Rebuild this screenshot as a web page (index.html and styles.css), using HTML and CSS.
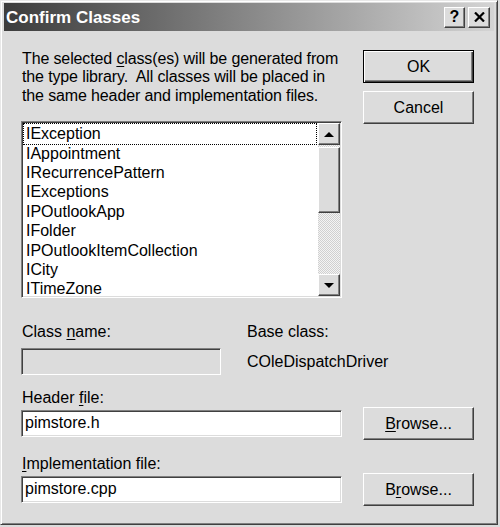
FILE: index.html
```html
<!DOCTYPE html>
<html lang="en">
<head>
    <meta charset="UTF-8">
    <title>Confirm Classes</title>
    <link rel="stylesheet" href="styles.css">
</head>
<body>
    <div class="window">
      <div class="titlebar">
        <span class="title">Confirm Classes</span>
        <div class="caption">
          <div class="cap-btn">?</div>
          <div class="cap-btn close">
            <svg width="11" height="10" viewBox="0 0 11 10">
              <path d="M1 0.5 L10 9.5 M10 0.5 L1 9.5" stroke="#000" stroke-width="2.2" fill="none"/>
            </svg>
          </div>
        </div>
      </div>
      <div class="client">
        <div class="top">
          <div class="leftPanel">
            <p class="intro">The selected <u>c</u>lass(es) will be generated from<br>the type library.&nbsp; All classes will be placed in<br>the same header and implementation files.</p>
            <div class="listbox">
              <ul class="items">
                <li class="focus">IException</li>
                <li>IAppointment</li>
                <li>IRecurrencePattern</li>
                <li>IExceptions</li>
                <li>IPOutlookApp</li>
                <li>IFolder</li>
                <li>IPOutlookItemCollection</li>
                <li>ICity</li>
                <li>ITimeZone</li>
              </ul>
              <div class="scrollbar">
                <div class="sb-btn">
                  <svg width="10" height="5" viewBox="0 0 10 5"><polygon points="5,0 10,5 0,5" fill="#000"/></svg>
                </div>
                <div class="sb-track sb-gap"></div>
                <div class="sb-thumb"></div>
                <div class="sb-track"></div>
                <div class="sb-btn">
                  <svg width="10" height="5" viewBox="0 0 10 5"><polygon points="0,0 10,0 5,5" fill="#000"/></svg>
                </div>
              </div>
            </div>
          </div>
          <div class="rightPanel">
            <div class="btn default">OK</div>
            <div class="btn">Cancel</div>
          </div>
        </div>

        <div class="form">
          <div class="labels">
            <span class="class-label">Class <u>n</u>ame:</span>
            <span>Base class:</span>
          </div>
          <div class="class-row">
            <div class="edit disabled"></div>
            <span class="base">COleDispatchDriver</span>
          </div>
          <div class="label header-label">Header <u>f</u>ile:</div>
          <div class="file-row">
            <div class="edit">pimstore.h</div>
            <div class="btn"><span><u>B</u>rowse...</span></div>
          </div>
          <div class="label impl-label"><u>I</u>mplementation file:</div>
          <div class="file-row">
            <div class="edit">pimstore.cpp</div>
            <div class="btn"><span>B<u>r</u>owse...</span></div>
          </div>
        </div>
      </div>
    </div>
</body>
</html>
```

FILE: styles.css
```css
* {
  box-sizing: border-box;
}

body {
  margin: 0;
  background-color: #dcdcdc;
  font-family: "Liberation Sans", Arial, sans-serif;
  font-size: 16px;
  color: #000;
}

u {
  text-underline-offset: 2px;
}

.window {
  width: 498px;
  height: 525px;
  display: flex;
  flex-direction: column;
  padding: 2px 3px 3px 3px;
  background-color: #dcdcdc;
  border: 1px solid;
  border-color: #e8e8e8 #404040 #404040 #e8e8e8;
  box-shadow: inset 1px 1px #fff, inset -1px -1px #808080;
}

.titlebar {
  height: 28px;
  flex: none;
  display: flex;
  align-items: center;
  justify-content: space-between;
  padding: 0 4px 0 2px;
  background: linear-gradient(to right, #3c3c3c, #d4d4d4);
}

.title {
  color: #fff;
  font-weight: bold;
  font-size: 17px;
  margin-top: 2px;
}

.caption {
  display: flex;
  gap: 3px;
}

.cap-btn {
  width: 21px;
  height: 21px;
  display: flex;
  align-items: center;
  justify-content: center;
  font-weight: bold;
  font-size: 16px;
  background-color: #dcdcdc;
  border: 1px solid;
  border-color: #fff #404040 #404040 #fff;
  box-shadow: inset -1px -1px #808080;
}

.cap-btn.close {
  width: 22px;
}

.client {
  flex: 1;
  padding: 19px 20px 0 17px;
}

.top {
  display: flex;
  gap: 20px;
  align-items: flex-start;
}

.leftPanel {
  width: 321px;
}

.intro {
  margin: 0 0 16px 1px;
  line-height: 18.4px;
  letter-spacing: -0.13px;
  white-space: nowrap;
}

.listbox {
  height: 177px;
  display: flex;
  padding: 1px;
  background-color: #fff;
  border: 1px solid;
  border-color: #808080 #fff #fff #808080;
  box-shadow: inset 1px 1px #404040, inset -1px -1px #dcdcdc;
}

.items {
  flex: 1;
  list-style: none;
  margin: 0;
  padding: 1px 2px 0 1px;
  overflow: hidden;
  line-height: 19.4px;
}

.items li {
  padding-left: 2px;
  white-space: nowrap;
}

.items li.focus {
  outline: 1px dotted #000;
}

.scrollbar {
  width: 22px;
  display: flex;
  flex-direction: column;
}

.sb-btn, .sb-thumb {
  background-color: #dcdcdc;
  border: 1px solid;
  border-color: #fff #404040 #404040 #fff;
  box-shadow: inset -1px -1px #808080;
}

.sb-btn {
  height: 22px;
  flex: none;
  display: flex;
  align-items: center;
  justify-content: center;
}

.sb-thumb {
  height: 66px;
  flex: none;
}

.sb-track {
  flex: 1;
  background: repeating-conic-gradient(#d0d0d0 0 25%, #f4f4f4 0 50%) 0 0 / 2px 2px;
}

.sb-track.sb-gap {
  flex: none;
  height: 2px;
}

.rightPanel {
  width: 111px;
  display: flex;
  flex-direction: column;
  gap: 8px;
  margin-left: 1px;
}

.btn {
  width: 111px;
  height: 33px;
  display: flex;
  align-items: center;
  justify-content: center;
  background-color: #dcdcdc;
  border: 1px solid;
  border-color: #fff #404040 #404040 #fff;
  box-shadow: inset -1px -1px #808080;
}

.btn.default {
  border-color: #000;
  box-shadow: inset 1px 1px #fff, inset -1px -1px #404040, inset -2px -2px #808080;
}

.form {
  margin-top: 26px;
}

.labels, .label {
  line-height: 16px;
  padding-left: 1px;
}

.labels {
  display: flex;
}

.class-label {
  width: 225px;
}

.class-row {
  display: flex;
  margin-top: 8px;
}

.edit {
  width: 321px;
  height: 27px;
  padding-left: 3px;
  line-height: 23px;
  background-color: #fff;
  border: 1px solid;
  border-color: #808080 #fff #fff #808080;
  box-shadow: inset 1px 1px #404040, inset -1px -1px #dcdcdc;
}

.edit.disabled {
  width: 200px;
  background-color: #dcdcdc;
}

.base {
  margin-left: 26px;
  line-height: 27px;
}

.header-label {
  margin-top: 15px;
}

.impl-label {
  margin-top: 16px;
}

.file-row {
  display: flex;
  align-items: center;
  gap: 21px;
  margin-top: 1px;
}
```
